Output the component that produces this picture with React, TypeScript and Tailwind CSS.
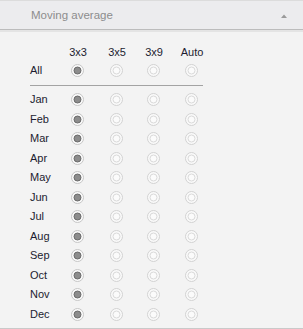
import { ReactNode } from 'react';

const MONTHS = ['Jan', 'Feb', 'Mar', 'Apr', 'May', 'Jun', 'Jul', 'Aug', 'Sep', 'Oct', 'Nov', 'Dec'];

const Radio = ({ checked }: { checked?: boolean }) =>
  checked ? (
    <svg width="13" height="13" viewBox="0 0 13 13">
      <circle cx="6.5" cy="6.5" r="6" fill="#fbfbfb" stroke="#c6c6c6" />
      <circle cx="6.5" cy="6.5" r="3.5" fill="#8c8c8c" stroke="#6a6a6a" />
    </svg>
  ) : (
    <svg width="13" height="13" viewBox="0 0 13 13">
      <circle cx="6.5" cy="6.5" r="6" fill="#f9f9f9" stroke="#d2d2d2" />
      <circle cx="6.5" cy="6.5" r="3.5" fill="#fbfbfb" stroke="#dadada" />
    </svg>
  );

// label column + four option columns, centred on the radios
const Row = ({ label, cells, className }: { label?: ReactNode; cells: ReactNode[]; className?: string }) => (
  <div className={`flex items-center ${className ?? ''}`}>
    <div className="w-[32px]">{label}</div>
    <div className="w-[30px] flex justify-center">{cells[0]}</div>
    <div className="w-[48px] flex justify-center">{cells[1]}</div>
    <div className="w-[26px] flex justify-center">{cells[2]}</div>
    <div className="w-[50px] flex justify-center">{cells[3]}</div>
  </div>
);

const options = [true, false, false, false];

export default function App() {
  return (
    <div className="w-[303px] h-[329px] bg-[#f3f3f3] text-[11px] font-['Liberation_Sans',Arial,sans-serif] border-b border-[#c9c9c9]">
      <div className="h-[30px] bg-[#ececee] border-t border-[#dcdcdc] border-b border-b-[#bcbcbc] flex items-center justify-between pl-[31px] pr-[16px] pt-[2px]">
        <span className="text-[11.5px] text-[#8d8d8d]">Moving average</span>
        <svg width="6" height="4" viewBox="0 0 6 4">
          <path d="M0 4 L3 0.5 L6 4 Z" fill="#9a9a9a" />
        </svg>
      </div>
      <div className="h-[2px] bg-[#e4e4e4]" />
      <div className="pl-[30px] pt-[11px] text-[#1c1c30]">
        <Row
          className="h-[18px]"
          cells={['3x3', '3x5', '3x9', 'Auto'].map(t => (
            <span key={t} className="pl-[2px]">
              {t}
            </span>
          ))}
        />
        <Row className="h-[19px]" label="All" cells={options.map((c, i) => <Radio key={i} checked={c} />)} />
        <div className="mt-[5px] w-[173px] h-px bg-[#a3a3a3]" />
        <div className="mt-[3.75px]">
          {MONTHS.map(m => (
            <Row key={m} className="h-[19.5px]" label={m} cells={options.map((c, i) => <Radio key={i} checked={c} />)} />
          ))}
        </div>
      </div>
    </div>
  );
}
